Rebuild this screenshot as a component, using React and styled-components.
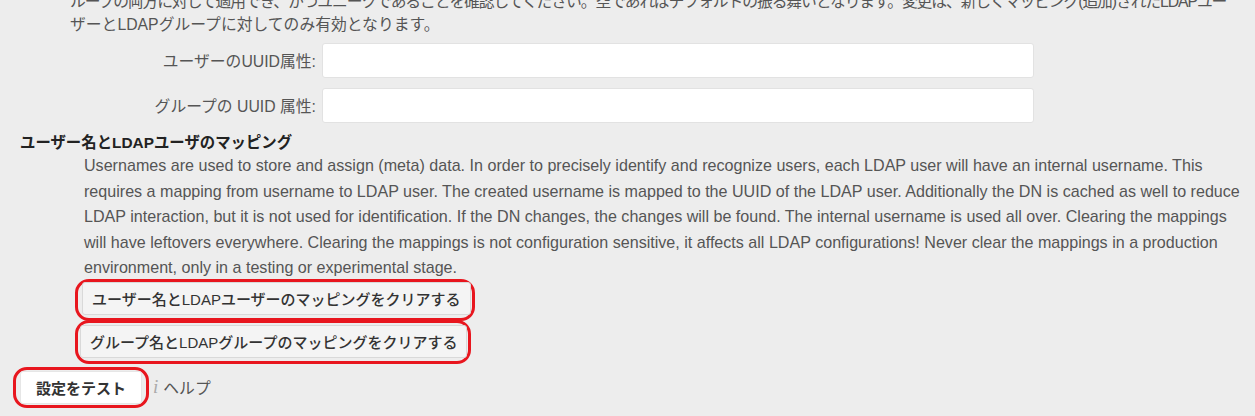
import React from 'react'
import styled, { createGlobalStyle } from 'styled-components'

const GlobalStyle = createGlobalStyle`
	html, body {
		margin: 0;
		background: #ededed;
		overflow: hidden;
	}
	body {
		font-family: 'Liberation Sans', 'Noto Sans CJK JP', sans-serif;
		font-size: 15.8px;
		color: #555;
	}
`

const Page = styled.div`
	width: 1255px;
	height: 416px;
	overflow: hidden;
`

const Intro = styled.p`
	margin: -10px 0 0;
	padding-left: 70px;
	font-size: 15.8px;
	line-height: 23px;
	white-space: nowrap;
`

const IntroLine = styled.span`
	letter-spacing: ${(p) => p.tracking || 0}px;
`

const Fields = styled.div`
	display: flex;
	flex-direction: column;
	gap: 10px;
	margin-top: 7px;
`

const FieldRow = styled.label`
	display: grid;
	grid-template-columns: 316px 712px;
	column-gap: 6px;
	align-items: center;
`

const FieldLabel = styled.span`
	text-align: right;
`

const TextInput = styled.input`
	box-sizing: border-box;
	height: 35px;
	background: #fff;
	border: 1px solid #e2e2e2;
	border-radius: 3px;
	font: inherit;
	padding: 0 8px;
	outline: none;
`

const SectionTitle = styled.h3`
	margin: 10px 0 0 20px;
	font-size: 15.4px;
	line-height: 20px;
	color: #222;
	font-weight: bold;
`

const Description = styled.p`
	margin: 0 0 0 84px;
	width: 1164px;
	font-size: 16.1px;
	line-height: 25.5px;
`

const ClearList = styled.div`
	display: flex;
	flex-direction: column;
	align-items: flex-start;
	margin: -2px 0 0 75px;
`

const Highlight = styled.div`
	display: flex;
	border: 3px solid #e8161e;
	border-radius: 14px;
	padding: ${(p) => p.pad || '0 1px 3px 4px'};
	margin-top: ${(p) => p.overlap || 0}px;
`

const Button = styled.button`
	box-sizing: border-box;
	height: ${(p) => p.h || 33}px;
	padding: 0 ${(p) => p.px || 9}px;
	background: ${(p) => (p.primary ? '#fff' : '#f4f4f4')};
	border: 1px solid ${(p) => (p.primary ? '#e6e6e6' : '#d9d9d9')};
	border-radius: 3px;
	font-family: 'Liberation Sans', 'Noto Sans CJK JP', sans-serif;
	font-size: 15px;
	font-weight: ${(p) => (p.primary ? 'bold' : '500')};
	color: #333;
	cursor: pointer;
`

const Footer = styled.div`
	display: flex;
	align-items: center;
	gap: 4px;
	margin: 3px 0 0 13px;
`

const Help = styled.a`
	display: flex;
	align-items: center;
	gap: 5px;
	color: #555;
	text-decoration: none;
`

const InfoIcon = styled.span`
	font-family: 'Liberation Serif', serif;
	font-style: italic;
	font-size: 19px;
	color: #aaa;
`

export default function App() {
	return (
		<Page>
			<GlobalStyle />
			<Intro>
				<IntroLine tracking={-1.1}>
					ループの両方に対して適用でき、かつユニークであることを確認してください。空であればデフォルトの振る舞いとなります。変更は、新しくマッピング(追加)されたLDAPユー
				</IntroLine>
				<br />
				<IntroLine>ザーとLDAPグループに対してのみ有効となります。</IntroLine>
			</Intro>
			<Fields>
				<FieldRow>
					<FieldLabel>ユーザーのUUID属性:</FieldLabel>
					<TextInput type="text" />
				</FieldRow>
				<FieldRow>
					<FieldLabel>グループの UUID 属性:</FieldLabel>
					<TextInput type="text" />
				</FieldRow>
			</Fields>
			<SectionTitle>ユーザー名とLDAPユーザのマッピング</SectionTitle>
			<Description>
				Usernames are used to store and assign (meta) data. In order to precisely identify and recognize users, each LDAP user
				will have an internal username. This requires a mapping from username to LDAP user. The created username is mapped to
				the UUID of the LDAP user. Additionally the DN is cached as well to reduce LDAP interaction, but it is not used for
				identification. If the DN changes, the changes will be found. The internal username is used all over. Clearing the
				mappings will have leftovers everywhere. Clearing the mappings is not configuration sensitive, it affects all LDAP
				configurations! Never clear the mappings in a production environment, only in a testing or experimental stage.
			</Description>
			<ClearList>
				<Highlight>
					<Button>ユーザー名とLDAPユーザーのマッピングをクリアする</Button>
				</Highlight>
				<Highlight pad="2px 1px 3px 2px" overlap={-1}>
					<Button>グループ名とLDAPグループのマッピングをクリアする</Button>
				</Highlight>
			</ClearList>
			<Footer>
				<Highlight pad="1px 4px 1px 4px">
					<Button primary px={15}>設定をテスト</Button>
				</Highlight>
				<Help href="#">
					<InfoIcon>i</InfoIcon>
					ヘルプ
				</Help>
			</Footer>
		</Page>
	)
}
